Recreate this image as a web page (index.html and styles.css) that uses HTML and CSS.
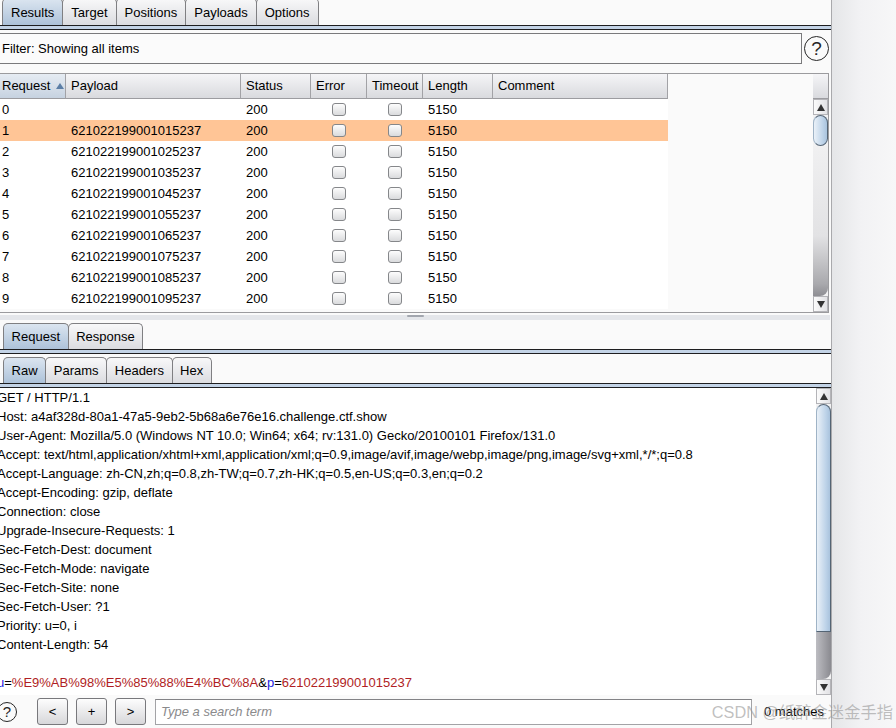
FILE: index.html
```html
<!DOCTYPE html>
<html>
<head>
<meta charset="utf-8">
<link rel="stylesheet" href="styles.css">
</head>
<body>
<div class="app">
  <div class="main">
    <div class="tabs top">
      <div class="tab sel">Results</div>
      <div class="tab">Target</div>
      <div class="tab">Positions</div>
      <div class="tab">Payloads</div>
      <div class="tab">Options</div>
    </div>
    <div class="tabline"></div>
    <div class="filter-row">
      <div class="filter">Filter: Showing all items</div>
      <div class="help big">?</div>
    </div>
    <div class="results">
      <div class="grid-wrap">
        <div class="grid">
          <div class="th first sorted">Request<span class="sort"></span></div>
          <div class="th">Payload</div>
          <div class="th">Status</div>
          <div class="th">Error</div>
          <div class="th">Timeout</div>
          <div class="th">Length</div>
          <div class="th">Comment</div>

          <div class="td first">0</div><div class="td"></div><div class="td">200</div><div class="td cb"><span class="box"></span></div><div class="td cb"><span class="box"></span></div><div class="td">5150</div><div class="td"></div>
          <div class="td first hl">1</div><div class="td hl">621022199001015237</div><div class="td hl">200</div><div class="td cb hl"><span class="box"></span></div><div class="td cb hl"><span class="box"></span></div><div class="td hl">5150</div><div class="td hl"></div>
          <div class="td first">2</div><div class="td">621022199001025237</div><div class="td">200</div><div class="td cb"><span class="box"></span></div><div class="td cb"><span class="box"></span></div><div class="td">5150</div><div class="td"></div>
          <div class="td first">3</div><div class="td">621022199001035237</div><div class="td">200</div><div class="td cb"><span class="box"></span></div><div class="td cb"><span class="box"></span></div><div class="td">5150</div><div class="td"></div>
          <div class="td first">4</div><div class="td">621022199001045237</div><div class="td">200</div><div class="td cb"><span class="box"></span></div><div class="td cb"><span class="box"></span></div><div class="td">5150</div><div class="td"></div>
          <div class="td first">5</div><div class="td">621022199001055237</div><div class="td">200</div><div class="td cb"><span class="box"></span></div><div class="td cb"><span class="box"></span></div><div class="td">5150</div><div class="td"></div>
          <div class="td first">6</div><div class="td">621022199001065237</div><div class="td">200</div><div class="td cb"><span class="box"></span></div><div class="td cb"><span class="box"></span></div><div class="td">5150</div><div class="td"></div>
          <div class="td first">7</div><div class="td">621022199001075237</div><div class="td">200</div><div class="td cb"><span class="box"></span></div><div class="td cb"><span class="box"></span></div><div class="td">5150</div><div class="td"></div>
          <div class="td first">8</div><div class="td">621022199001085237</div><div class="td">200</div><div class="td cb"><span class="box"></span></div><div class="td cb"><span class="box"></span></div><div class="td">5150</div><div class="td"></div>
          <div class="td first">9</div><div class="td">621022199001095237</div><div class="td">200</div><div class="td cb"><span class="box"></span></div><div class="td cb"><span class="box"></span></div><div class="td">5150</div><div class="td"></div>
        </div>
      </div>
      <div class="vscroll table-scroll">
        <div class="corner"></div>
        <div class="arrow"><span class="tri up"></span></div>
        <div class="thumb"></div>
        <div class="track"></div>
        <div class="arrow"><span class="tri down"></span></div>
      </div>
    </div>
    <div class="split"><div class="band"><span class="grip"></span></div></div>
    <div class="tabs sub">
      <div class="tab sel">Request</div>
      <div class="tab">Response</div>
    </div>
    <div class="tabline"></div>
    <div class="tabs sub gap">
      <div class="tab sel">Raw</div>
      <div class="tab">Params</div>
      <div class="tab">Headers</div>
      <div class="tab">Hex</div>
    </div>
    <div class="tabline"></div>
    <div class="editor">
      <div class="text"><div class="ln">GET / HTTP/1.1</div><div class="ln">Host: a4af328d-80a1-47a5-9eb2-5b68a6e76e16.challenge.ctf.show</div><div class="ln">User-Agent: Mozilla/5.0 (Windows NT 10.0; Win64; x64; rv:131.0) Gecko/20100101 Firefox/131.0</div><div class="ln">Accept: text/html,application/xhtml+xml,application/xml;q=0.9,image/avif,image/webp,image/png,image/svg+xml,*/*;q=0.8</div><div class="ln">Accept-Language: zh-CN,zh;q=0.8,zh-TW;q=0.7,zh-HK;q=0.5,en-US;q=0.3,en;q=0.2</div><div class="ln">Accept-Encoding: gzip, deflate</div><div class="ln">Connection: close</div><div class="ln">Upgrade-Insecure-Requests: 1</div><div class="ln">Sec-Fetch-Dest: document</div><div class="ln">Sec-Fetch-Mode: navigate</div><div class="ln">Sec-Fetch-Site: none</div><div class="ln">Sec-Fetch-User: ?1</div><div class="ln">Priority: u=0, i</div><div class="ln">Content-Length: 54</div><div class="ln">&nbsp;</div><div class="ln"><span class="pn">u</span>=<span class="pv">%E9%AB%98%E5%85%88%E4%BC%8A</span>&amp;<span class="pn">p</span>=<span class="pv">621022199001015237</span></div></div>
      <div class="vscroll edit-scroll">
        <div class="arrow"><span class="tri up"></span></div>
        <div class="thumb"></div>
        <div class="track"></div>
        <div class="arrow"><span class="tri down"></span></div>
      </div>
    </div>
    <div class="bottombar">
      <div class="help small">?</div>
      <div class="btns">
        <div class="btn">&lt;</div>
        <div class="btn">+</div>
        <div class="btn">&gt;</div>
      </div>
      <div class="search">Type a search term</div>
      <div class="matches">0 matches</div>
    </div>
  </div>
  <div class="side"></div>
  <div class="watermark">CSDN @纸醉金迷金手指</div>
</div>
</body>
</html>
```

FILE: styles.css
```css
* { box-sizing: border-box; }
html, body { margin: 0; padding: 0; }
body {
  font-family: "Liberation Sans", Arial, sans-serif;
  font-size: 13px;
  color: #000;
  background: #f0f0f2;
}
.app {
  display: flex;
  width: 896px;
  height: 728px;
  overflow: hidden;
  position: relative;
}
.main {
  width: 832px;
  height: 728px;
  flex: none;
  background: #fafafa;
  border-right: 1px solid #a9a9ac;
  display: flex;
  flex-direction: column;
  overflow: hidden;
}
.side {
  flex: 1;
  background: linear-gradient(to right, #e5e6e8, #f2f2f4 45%, #f7f7f8);
}

/* tabs */
.tabs {
  display: flex;
  align-items: flex-end;
  height: 26px;
  padding-left: 3px;
  flex: none;
}
.tabs.top { height: 25px; padding-left: 2px; }
.tabs.gap { margin-top: 3px; }
.tab {
  height: 26px;
  padding: 0 8px;
  border: 1px solid #7f7f82;
  border-bottom: none;
  border-radius: 5px 5px 0 0;
  background: linear-gradient(#f8f8f9, #dbdce0);
  display: flex;
  align-items: center;
  margin-left: -1px;
  white-space: nowrap;
}
.tabs.sub .tab { padding: 0 7.6px; }
.tab:first-child { margin-left: 0; }
.tabs.top .tab { height: 27px; }
.tab.sel {
  background: linear-gradient(#dbe5f0, #adc2d9);
  position: relative;
}
.tabline {
  height: 5px;
  flex: none;
  border-top: 1px solid #1e1e20;
  border-bottom: 1px solid #1e1e20;
  background: #c3d3e6;
}

/* filter */
.filter-row {
  display: flex;
  align-items: center;
  gap: 2px;
  margin-top: 3px;
  height: 31px;
  flex: none;
}
.filter {
  width: 802px;
  height: 31px;
  border: 1px solid #7a7a7c;
  border-left: none;
  background: #fbfbfb;
  padding-left: 2px;
  display: flex;
  align-items: center;
}
.help {
  border: 1.5px solid #262626;
  border-radius: 50%;
  display: flex;
  align-items: center;
  justify-content: center;
  color: #262626;
  flex: none;
}
.help.big { width: 25px; height: 25px; font-size: 19px; }
.help.small { width: 20px; height: 20px; font-size: 15px; margin-left: -3px; border-width: 1.3px; }

/* results table */
.results {
  margin-top: 9px;
  height: 240px;
  width: 829px;
  flex: none;
  border: 1px solid #9b9b9e;
  border-left: none;
  display: flex;
}
.grid-wrap {
  flex: 1;
  background: #fafafa;
  overflow: hidden;
}
.grid {
  display: grid;
  grid-template-columns: 66px 175px 70px 56px 56px 70px 175px;
  grid-template-rows: 25px;
  grid-auto-rows: 21px;
  width: 668px;
}
.th {
  background: linear-gradient(#f5f5f7, #d9dade);
  border-right: 1px solid #a2a2a6;
  border-bottom: 1px solid #9c9ca0;
  padding-left: 5px;
  padding-bottom: 1px;
  display: flex;
  align-items: center;
  white-space: nowrap;
}
.th.first { padding-left: 2px; }
.th.sorted { background: linear-gradient(#e6ecf3, #c6d2e0); }
.sort {
  width: 0;
  height: 0;
  margin-left: 6px;
  border-left: 4px solid transparent;
  border-right: 4px solid transparent;
  border-bottom: 6px solid #5b7ea6;
}
.td {
  background: #fff;
  padding-left: 5px;
  display: flex;
  align-items: center;
  white-space: nowrap;
}
.td.first { padding-left: 2px; }
.td.hl { background: #ffc596; }
.td.cb { justify-content: center; padding-left: 0; }
.box {
  width: 14px;
  height: 13px;
  border: 1px solid #85878a;
  border-radius: 3px;
  background: linear-gradient(#fdfdfd, #dadbdd);
}

/* scrollbars */
.vscroll {
  width: 15px;
  flex: none;
  display: flex;
  flex-direction: column;
  background: #f2f2f3;
}
.corner {
  height: 25px;
  background: linear-gradient(#f5f5f7, #d9dade);
  border-bottom: 1px solid #9c9ca0;
}
.arrow {
  height: 16px;
  flex: none;
  display: flex;
  align-items: center;
  justify-content: center;
  background: linear-gradient(to right, #fbfbfb, #e2e2e5);
  border: 1px solid #b4b4b8;
}
.tri {
  width: 0;
  height: 0;
  border-left: 4px solid transparent;
  border-right: 4px solid transparent;
}
.tri.up { border-bottom: 7px solid #333; }
.tri.down { border-top: 7px solid #333; }
.thumb {
  flex: none;
  border: 1px solid #546474;
  border-left-color: #9fb3c6;
  background: linear-gradient(to right, #eaf1f8, #bcd2e8 70%, #a9c3dd);
}
.track {
  flex: 1;
}
.table-scroll .thumb { height: 31px; border-radius: 8px; }
.table-scroll .track {
  background: linear-gradient(#f0f0f1, #e2e2e4 60%, #a9a9ad 92%, #8e8e93);
  border-radius: 0 0 8px 0;
}
.edit-scroll .thumb { height: 228px; border-radius: 8px 8px 0 0; }
.edit-scroll .track {
  background: linear-gradient(to right, #bdbdc2, #8a8a90);
  border-radius: 0 0 8px 0;
}

/* splitter */
.split {
  height: 10px;
  flex: none;
  padding-top: 2px;
}
.band {
  width: 830px;
  height: 5px;
  background: #e4e6ea;
  display: flex;
  justify-content: center;
}
.grip {
  width: 17px;
  height: 2px;
  border-radius: 1px;
  background: #a2a6ae;
}

/* editor */
.editor {
  height: 307px;
  flex: none;
  display: flex;
  background: #fff;
}
.text {
  flex: 1;
  overflow: hidden;
  margin-left: -3px;
  line-height: 19px;
}
.ln { white-space: pre; height: 19px; }
.pn { color: #1c1ce0; }
.pv { color: #b01e24; }

/* bottom bar */
.bottombar {
  flex: 1;
  display: flex;
  align-items: center;
}
.btns {
  display: flex;
  gap: 8px;
  margin-left: 20px;
}
.btn {
  width: 31px;
  height: 27px;
  border: 1px solid #78787c;
  border-radius: 3px;
  background: linear-gradient(#fdfdfd, #d7d7da);
  display: flex;
  align-items: center;
  justify-content: center;
}
.search {
  margin-left: 9px;
  width: 597px;
  height: 26px;
  border: 1px solid #a3a3a6;
  border-top-color: #838386;
  background: #fff;
  padding-left: 5px;
  color: #8a8a8c;
  font-style: italic;
  display: flex;
  align-items: center;
}
.matches { margin-left: 12px; white-space: nowrap; }
.watermark {
  position: absolute;
  right: 3px;
  top: 701px;
  font-family: "Liberation Sans", "Noto Sans CJK SC", sans-serif;
  font-size: 16.3px;
  line-height: 22px;
  color: rgba(150, 150, 150, 0.6);
  white-space: nowrap;
  pointer-events: none;
}
```
